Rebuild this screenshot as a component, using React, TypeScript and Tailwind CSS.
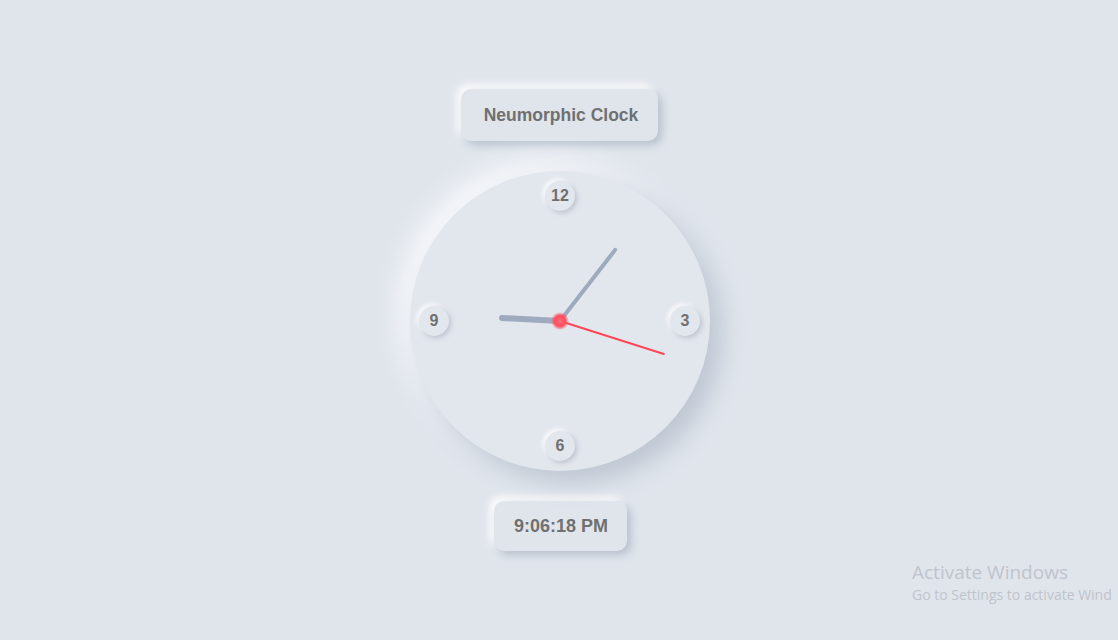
const raised = "shadow-[4px_4px_8px_#b8c0cc,-4px_-4px_8px_#ffffff]";

function Numeral({ label, pos }: { label: string; pos: string }) {
  return (
    <div
      className={`absolute ${pos} w-[30px] h-[30px] -ml-[15px] -mt-[15px] rounded-full bg-[#e2e6ed] flex items-center justify-center text-[16px] font-bold text-[#707070] shadow-[2px_2px_5px_#bcc3ce,-2px_-2px_5px_#ffffff]`}
    >
      {label}
    </div>
  );
}

function Hand({ angle, length, width, color }: { angle: number; length: number; width: number; color: string }) {
  const r = (angle * Math.PI) / 180;
  const x = 150 + Math.sin(r) * length;
  const y = 150 - Math.cos(r) * length;
  return <line x1={150} y1={150} x2={x} y2={y} stroke={color} strokeWidth={width} strokeLinecap="round" />;
}

export default function App() {
  return (
    <div
      className="min-h-screen w-full bg-[#e0e5ec] flex flex-col items-center justify-center gap-[30px] relative overflow-hidden"
      style={{ fontFamily: '"Liberation Sans", Arial, sans-serif' }}
    >
      <div className={`w-[197px] h-[52px] pt-[1px] pl-[4px] rounded-[10px] bg-[#e0e5ec] flex items-center justify-center text-[17.5px] font-bold text-[#707070] ${raised}`}>
        Neumorphic Clock
      </div>

      <div className="relative w-[300px] h-[300px] rounded-full bg-[#e2e6ed] shadow-[12px_12px_24px_#bec6d2,-12px_-12px_24px_#f6f8fb] ml-[2px]">
        <Numeral label="12" pos="left-[150px] top-[25px]" />
        <Numeral label="3" pos="left-[275px] top-[150px]" />
        <Numeral label="6" pos="left-[150px] top-[275px]" />
        <Numeral label="9" pos="left-[24px] top-[150px]" />
        <svg className="absolute inset-0" width="300" height="300" viewBox="0 0 300 300">
          <defs>
            <radialGradient id="dot" cx="50%" cy="50%" r="50%">
              <stop offset="0%" stopColor="#ff6b78" />
              <stop offset="60%" stopColor="#ff4d5e" />
              <stop offset="100%" stopColor="#ff4d5e" stopOpacity="0" />
            </radialGradient>
          </defs>
          <Hand angle={273} length={58} width={6} color="#9eaabd" />
          <Hand angle={37.8} length={90} width={4} color="#9eaabd" />
          <Hand angle={107.6} length={109} width={2} color="#ff4757" />
          <circle cx={150} cy={150} r={9} fill="url(#dot)" />
        </svg>
      </div>

      <div className={`w-[133px] h-[50px] pl-[2px] rounded-[10px] bg-[#e0e5ec] flex items-center justify-center text-[18px] font-bold text-[#707070] ml-[2px] ${raised}`}>
        9:06:18 PM
      </div>

      <div
        className="absolute left-[912px] top-[563px] text-[#bfc4cb] whitespace-nowrap leading-none"
        style={{ fontFamily: '"Open Sans", "Noto Sans", sans-serif' }}
      >
        <div className="text-[19px]">Activate Windows</div>
        <div className="text-[14px] mt-[6px]">Go to Settings to activate Wind</div>
      </div>
    </div>
  );
}
